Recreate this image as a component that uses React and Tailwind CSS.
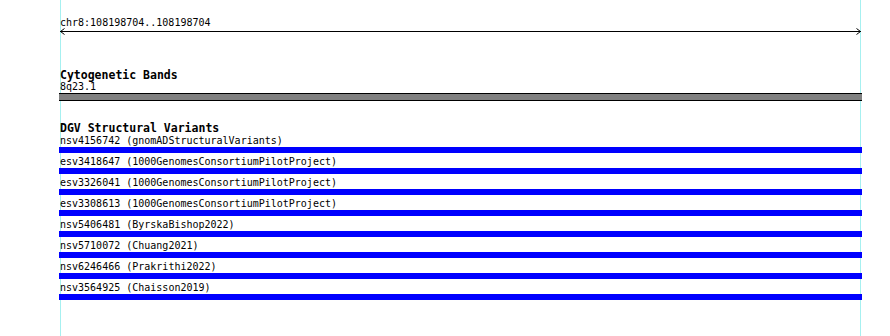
// genome browser track panel: location ruler, cytoband, structural variant features
const variants = [
  ["nsv4156742", "gnomADStructuralVariants"],
  ["esv3418647", "1000GenomesConsortiumPilotProject"],
  ["esv3326041", "1000GenomesConsortiumPilotProject"],
  ["esv3308613", "1000GenomesConsortiumPilotProject"],
  ["nsv5406481", "ByrskaBishop2022"],
  ["nsv5710072", "Chuang2021"],
  ["nsv6246466", "Prakrithi2022"],
  ["nsv3564925", "Chaisson2019"],
];

const mono = { fontFamily: '"DejaVu Sans Mono", "Liberation Mono", monospace' };

const App = () => {
  return (
    <div className="relative w-[890px] h-[336px] bg-white overflow-hidden text-black" style={mono}>
      <div className="absolute top-0 bottom-0 left-[60px] w-px bg-[#a6f0f0]"></div>
      <div className="absolute top-0 bottom-0 left-[860px] w-px bg-[#a6f0f0]"></div>

      <div className="relative ml-[59px] w-[803px] pt-[16px]">
        <div className="pl-[1px] text-[10px] leading-[14px]">chr8:108198704..108198704</div>
        <svg className="block ml-[1px] -mt-[2px]" width="802" height="7" viewBox="0 0 802 7">
          <line x1="0" y1="3.5" x2="801" y2="3.5" stroke="#000" strokeWidth="1" />
          <polyline points="4.5,0.5 0.5,3.5 4.5,6.5" fill="none" stroke="#000" strokeWidth="1" />
          <polyline points="796.5,0.5 800.5,3.5 796.5,6.5" fill="none" stroke="#000" strokeWidth="1" />
        </svg>

        <div className="mt-[34px] pl-[1px] text-[11.5px] font-bold leading-[12px]">Cytogenetic Bands</div>
        <div className="pl-[1px] text-[10px] leading-[12px]">8q23.1</div>
        <div className="h-[8px] border-y border-black bg-[#808080]"></div>

        <div className="mt-[22px] pl-[1px] text-[11.5px] font-bold leading-[10px]">DGV Structural Variants</div>
        <div className="flex flex-col gap-[1px]">
          {variants.map(([id, study]) => (
            <div key={id} className="flex flex-col">
              <div className="pl-[1px] pt-[1px] text-[10px] leading-[13px] whitespace-pre">{id} ({study})</div>
              <div className="h-[6px] bg-[#0000ff]"></div>
            </div>
          ))}
        </div>
      </div>
    </div>
  );
};

export default App;
